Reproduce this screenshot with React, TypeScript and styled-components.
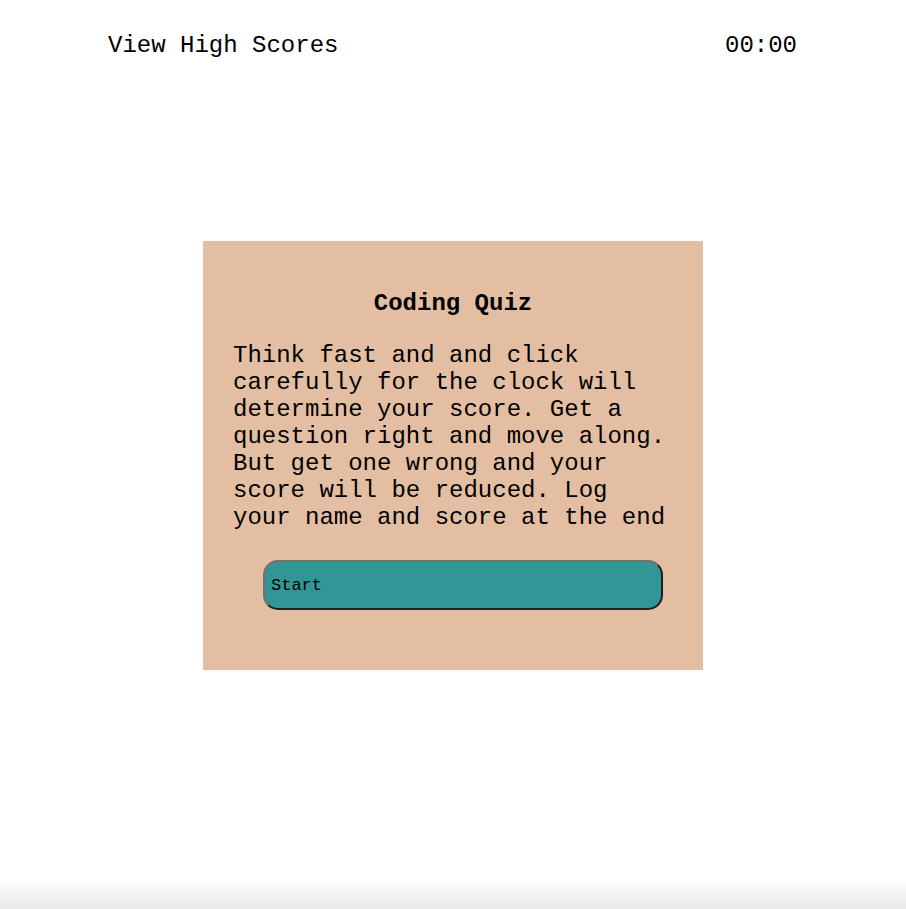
import React from "react";
import styled, { createGlobalStyle } from "styled-components";

const GlobalStyle = createGlobalStyle`
  html, body {
    margin: 0;
    padding: 0;
    background: #ffffff;
  }
  body {
    font-family: "Liberation Mono", "Courier New", monospace;
    color: #000;
  }
`;

const Page = styled.div`
  min-height: 909px;
  display: flex;
  flex-direction: column;
`;

const Header = styled.header`
  display: flex;
  justify-content: space-between;
  align-items: center;
  padding: 32px 109px 0 108px;
  font-size: 24px;
  line-height: 27px;
`;

const HeaderLink = styled.span`
  cursor: pointer;
`;

const Timer = styled.span``;

const Card = styled.section`
  box-sizing: border-box;
  width: 500px;
  margin: 182px auto 0;
  padding: 49px 30px 60px;
  background: #e3bea2;
  display: flex;
  flex-direction: column;
  align-items: stretch;
`;

const Title = styled.h1`
  margin: 0;
  font-size: 24px;
  line-height: 27px;
  font-weight: bold;
  text-align: center;
`;

const Body = styled.p`
  margin: 25px 0 0;
  font-size: 24px;
  line-height: 27px;
`;

const StartButton = styled.button`
  box-sizing: border-box;
  align-self: flex-start;
  width: 400px;
  height: 50px;
  margin: 29px 0 0 30px;
  padding: 1px 6px;
  background: #339696;
  border: 2px solid;
  border-color: #7a6e68 #1f1f1f #1f1f1f #7a6e68;
  border-radius: 15px;
  font-family: "Liberation Mono", "Courier New", monospace;
  font-size: 17px;
  color: #000;
  text-align: left;
  cursor: pointer;
`;

const BottomShade = styled.div`
  position: fixed;
  left: 0;
  right: 0;
  bottom: 0;
  height: 30px;
  pointer-events: none;
  background: linear-gradient(to bottom, rgba(255,255,255,0) 0%, rgba(232,232,232,1) 100%);
`;

export default function App() {
  return (
    <>
      <GlobalStyle />
      <Page>
        <Header>
          <HeaderLink>View High Scores</HeaderLink>
          <Timer>00:00</Timer>
        </Header>
        <Card>
          <Title>Coding Quiz</Title>
          <Body>
            Think fast and and click carefully for the clock will determine your
            score. Get a question right and move along. But get one wrong and
            your score will be reduced. Log your name and score at the end
          </Body>
          <StartButton>Start</StartButton>
        </Card>
      </Page>
      <BottomShade />
    </>
  );
}
